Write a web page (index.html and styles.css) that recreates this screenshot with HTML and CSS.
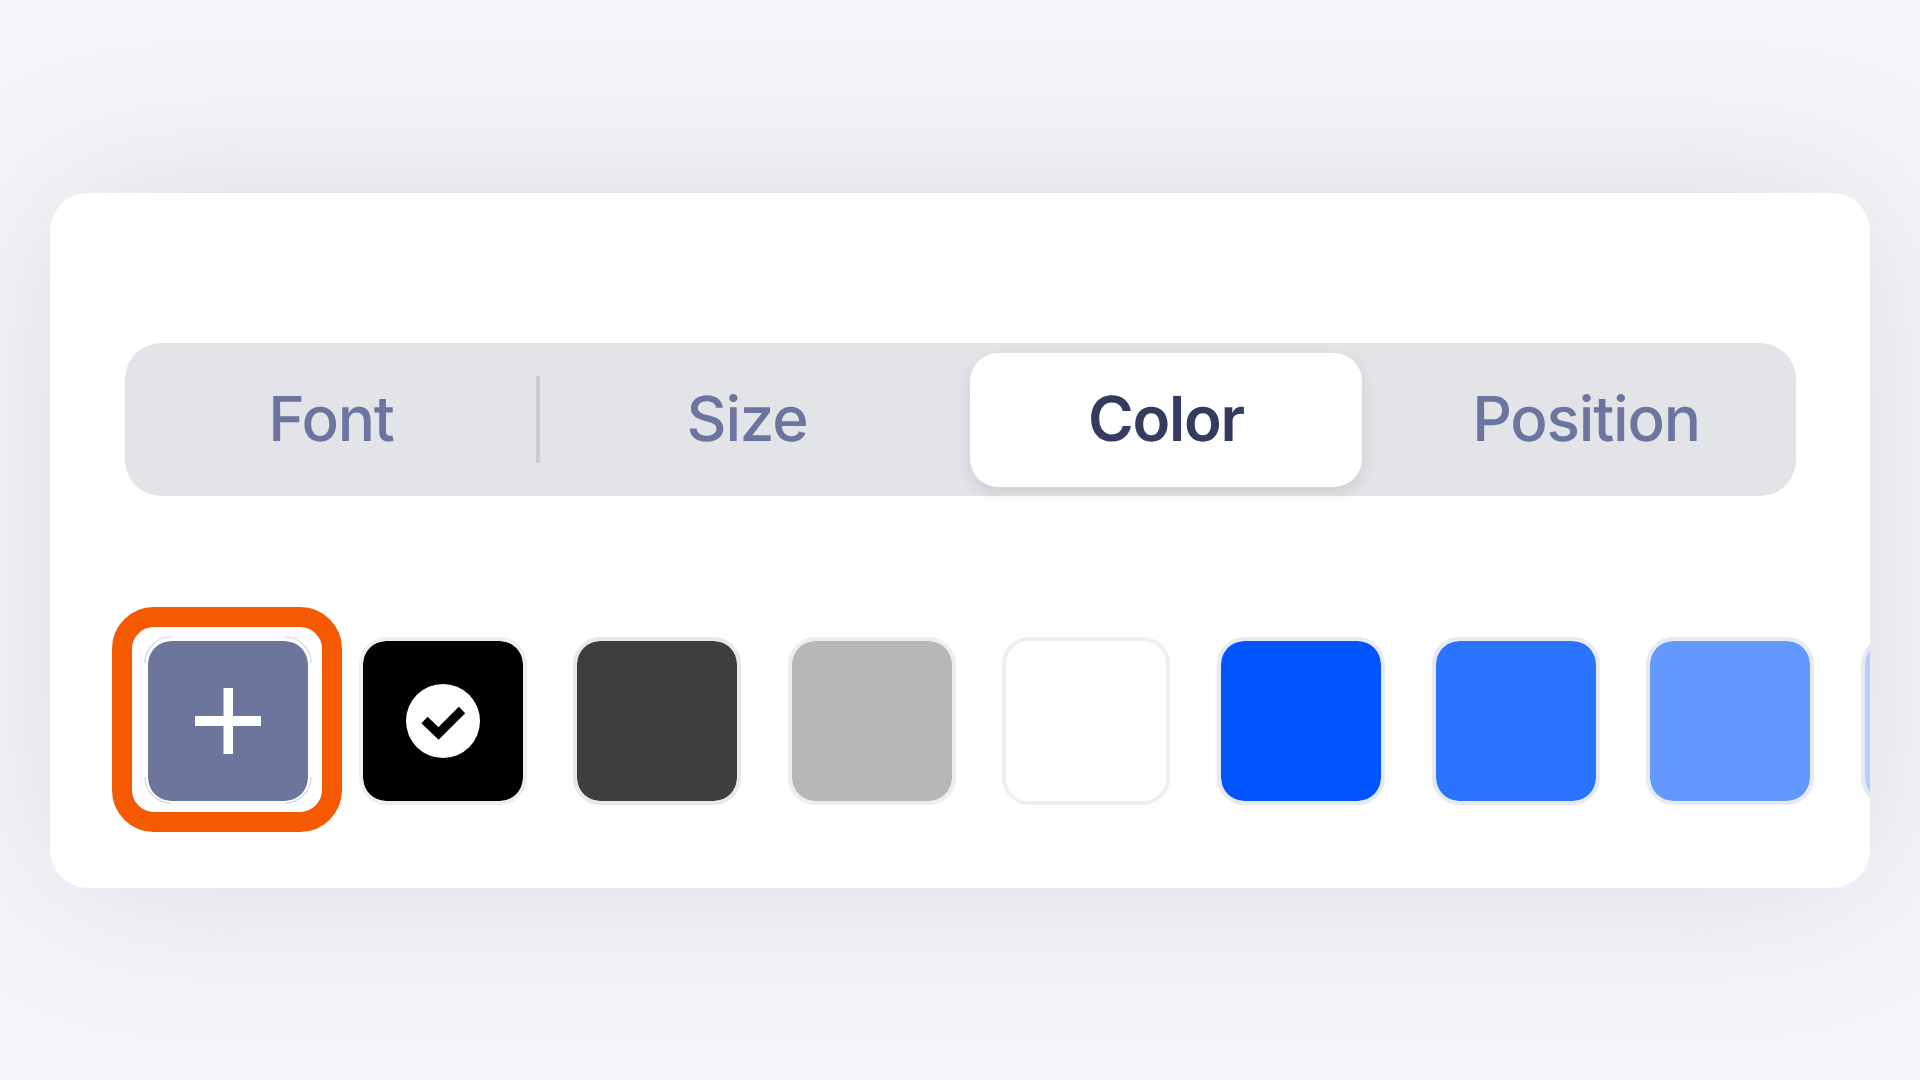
FILE: index.html
```html
<!DOCTYPE html>
<html lang="en">
<head>
  <meta charset="UTF-8">
  <meta name="viewport" content="width=device-width, initial-scale=1.0">
  <title>Text color</title>
  <link rel="stylesheet" href="styles.css">
</head>
<body>
  <div class="card">
    <div class="tabs">
      <a href="#" class="tab tab-divided">Font</a>
      <a href="#" class="tab">Size</a>
      <a href="#" class="tab active">Color</a>
      <a href="#" class="tab">Position</a>
    </div>

    <div class="swatches">
      <div class="swatch swatch-add">
        <svg class="corners" width="168" height="168" viewBox="0 0 168 168" fill="none" stroke="#d3d3d8" stroke-width="1.2">
          <path d="M1 27A26 26 0 0 1 27 1"/>
          <path d="M141 1A26 26 0 0 1 167 27"/>
          <path d="M167 141A26 26 0 0 1 141 167"/>
          <path d="M27 167A26 26 0 0 1 1 141"/>
        </svg>
        <svg width="66" height="66" viewBox="0 0 66 66" fill="#fff">
          <rect x="28.500" y="0" width="9.500" height="66"/>
          <rect x="0" y="28" width="66" height="10"/>
        </svg>
        <span class="callout"></span>
      </div>
      <div class="swatch swatch-black">
        <span class="selected">
          <svg width="74" height="74" viewBox="0 0 74 74" fill="none" stroke="#000" stroke-width="9">
            <path d="M18.500 36L32.500 49.500L56 26"/>
          </svg>
        </span>
      </div>
      <div class="swatch swatch-dark"></div>
      <div class="swatch swatch-gray"></div>
      <div class="swatch swatch-white"></div>
      <div class="swatch swatch-blue"></div>
      <div class="swatch swatch-blue2"></div>
      <div class="swatch swatch-blue3"></div>
      <div class="swatch swatch-blue4"></div>
    </div>
  </div>
</body>
</html>
```

FILE: styles.css
```css
body {
  font-family: Inter, "Liberation Sans", sans-serif;
  background-color: #f5f5fa;
  margin: 0;
  height: 1080px;
  padding-top: 193px;
  box-sizing: border-box;
  overflow: hidden;
}
.card {
  position: relative;
  margin: 0 50px;
  height: 695px;
  padding: 150px 0 0 75px;
  box-sizing: border-box;
  background: white;
  border-radius: 38px;
  box-shadow: 0 0 170px rgba(70, 70, 90, 0.14);
  overflow: hidden;
}
.tabs {
  display: grid;
  grid-template-columns: 412px 420px 419px 420px;
  width: 1671px;
  height: 153px;
  background-color: #e2e4e8;
  border-radius: 36px;
}
.tab {
  display: flex;
  align-items: center;
  justify-content: center;
  padding-bottom: 3px;
  box-sizing: border-box;
  font-size: 62px;
  letter-spacing: -1.2px;
  font-weight: 500;
  text-rendering: geometricPrecision;
  color: #6b759f;
  text-decoration: none;
}
.tab-divided {
  position: relative;
}
.tab-divided::after {
  content: "";
  position: absolute;
  right: -3px;
  top: 33px;
  width: 4px;
  height: 87px;
  background-color: #caccd2;
}
.active {
  margin: 10px 14px 9px 13px;
  font-weight: 600;
  color: #343b5f;
  background: white;
  border-radius: 28px;
  box-shadow: 0 6px 16px rgba(0, 0, 0, 0.1);
}
.swatches {
  display: flex;
  gap: 46.600px;
  margin: 140.500px 0 0 19px;
}
.swatch {
  position: relative;
  flex-shrink: 0;
  display: flex;
  align-items: center;
  justify-content: center;
  width: 168px;
  height: 168px;
  box-sizing: border-box;
  border: 4.500px solid #e8eaf3;
  border-radius: 27px;
}
.swatch-add {
  background: #6c759b padding-box;
  border-color: white;
}
.corners {
  position: absolute;
  left: -4.500px;
  top: -4.500px;
}
.callout {
  position: absolute;
  left: -36px;
  top: -33.500px;
  width: 230px;
  height: 225px;
  box-sizing: border-box;
  border: 20px solid #f55a00;
  border-radius: 42px;
}
.swatch-black {
  background: black padding-box;
  border-color: #efeff1;
}
.selected {
  display: flex;
  width: 74px;
  height: 74px;
  background: white;
  border-radius: 50%;
}
.swatch-dark {
  background: #3e3e3e padding-box;
  border-color: #e8e8ea;
}
.swatch-gray {
  background: #b7b7b7 padding-box;
  border-color: #eeeef0;
}
.swatch-white {
  background: white;
  border-color: #eeeff3;
}
.swatch-blue {
  background: #0055ff padding-box;
}
.swatch-blue2 {
  background: #2b74ff padding-box;
}
.swatch-blue3 {
  background: #6398ff padding-box;
}
.swatch-blue4 {
  background: #b5cdff padding-box;
}
```
